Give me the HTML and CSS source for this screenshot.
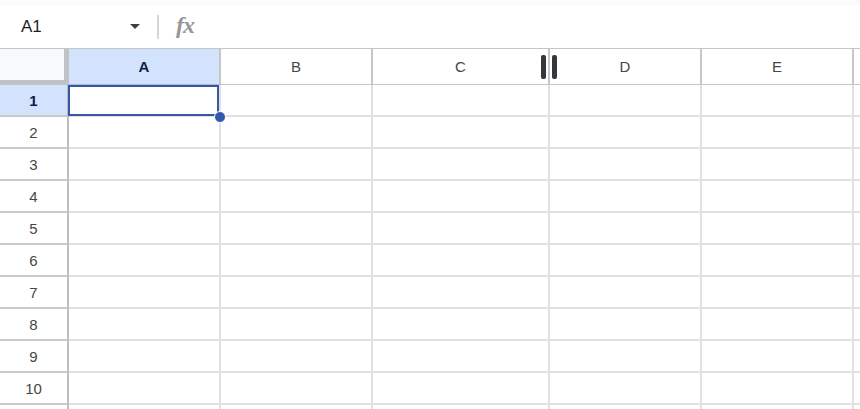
FILE: index.html
```html
<!DOCTYPE html>
<html>
<head>
<meta charset="utf-8">
<link rel="stylesheet" href="styles.css">
</head>
<body>
<div class="topstrip"></div>
<div class="fbar">
  <div class="namebox">
    <span class="ref">A1</span>
    <span class="caret"></span>
  </div>
  <div class="sep"></div>
  <span class="fx">fx</span>
</div>
<div class="sheet">
  <div class="hrow">
    <div class="corner"></div>
    <div class="ch sel">A</div>
    <div class="ch">B</div>
    <div class="ch wide">C</div>
    <div class="ch">D</div>
    <div class="ch">E</div>
    <div class="ch rest"></div>
    <div class="resize"><span></span><span></span></div>
  </div>
  <div class="row">
    <div class="rh sel">1</div>
    <div class="c active"><div class="selbox"></div><div class="dot"></div></div>
    <div class="c"></div><div class="c wide"></div><div class="c"></div><div class="c"></div><div class="c rest"></div>
  </div>
  <div class="row"><div class="rh">2</div><div class="c"></div><div class="c"></div><div class="c wide"></div><div class="c"></div><div class="c"></div><div class="c rest"></div></div>
  <div class="row"><div class="rh">3</div><div class="c"></div><div class="c"></div><div class="c wide"></div><div class="c"></div><div class="c"></div><div class="c rest"></div></div>
  <div class="row"><div class="rh">4</div><div class="c"></div><div class="c"></div><div class="c wide"></div><div class="c"></div><div class="c"></div><div class="c rest"></div></div>
  <div class="row"><div class="rh">5</div><div class="c"></div><div class="c"></div><div class="c wide"></div><div class="c"></div><div class="c"></div><div class="c rest"></div></div>
  <div class="row"><div class="rh">6</div><div class="c"></div><div class="c"></div><div class="c wide"></div><div class="c"></div><div class="c"></div><div class="c rest"></div></div>
  <div class="row"><div class="rh">7</div><div class="c"></div><div class="c"></div><div class="c wide"></div><div class="c"></div><div class="c"></div><div class="c rest"></div></div>
  <div class="row"><div class="rh">8</div><div class="c"></div><div class="c"></div><div class="c wide"></div><div class="c"></div><div class="c"></div><div class="c rest"></div></div>
  <div class="row"><div class="rh">9</div><div class="c"></div><div class="c"></div><div class="c wide"></div><div class="c"></div><div class="c"></div><div class="c rest"></div></div>
  <div class="row"><div class="rh">10</div><div class="c"></div><div class="c"></div><div class="c wide"></div><div class="c"></div><div class="c"></div><div class="c rest"></div></div>
  <div class="row"><div class="rh"></div><div class="c"></div><div class="c"></div><div class="c wide"></div><div class="c"></div><div class="c"></div><div class="c rest"></div></div>
</div>
</body>
</html>
```

FILE: styles.css
```css
* { box-sizing: border-box; }
html, body {
  margin: 0;
  padding: 0;
  background: #ffffff;
  overflow: hidden;
  height: 409px;
  font-family: "Liberation Sans", Arial, sans-serif;
}
.topstrip {
  height: 5px;
  background: #f9fbfd;
}
.fbar {
  height: 44px;
  display: flex;
  align-items: center;
  border-bottom: 1px solid #c4c7c5;
}
.namebox {
  width: 157px;
  display: flex;
  align-items: center;
  justify-content: space-between;
  padding-left: 21px;
  padding-right: 17px;
}
.ref {
  font-size: 17px;
  color: #1f1f1f;
}
.caret {
  width: 0;
  height: 0;
  border-left: 5px solid transparent;
  border-right: 5px solid transparent;
  border-top: 5px solid #3c4043;
}
.sep {
  width: 2px;
  height: 24px;
  background: #d6d6d6;
}
.fx {
  margin-left: 17px;
  margin-top: -2px;
  font-family: "Liberation Serif", "Times New Roman", serif;
  font-style: italic;
  font-weight: bold;
  font-size: 24px;
  color: #979797;
  letter-spacing: -1px;
}
.sheet {
  display: flex;
  flex-direction: column;
}
.hrow, .row {
  display: flex;
  position: relative;
  flex: none;
}
.hrow { height: 36px; }
.row { height: 32px; }
.corner {
  width: 69px;
  flex: none;
  background: #f8f9fa;
  border-right: 5px solid #c0c2c4;
  border-bottom: 5px solid #c0c2c4;
}
.ch {
  width: 152px;
  flex: none;
  border-right: 2px solid #c4c7c5;
  border-bottom: 1px solid #c4c7c5;
  display: flex;
  align-items: center;
  justify-content: center;
  font-size: 15px;
  color: #444746;
  background: #ffffff;
}
.ch.wide, .c.wide { width: 177px; }
.ch.rest, .c.rest { flex: 1; border-right: none; }
.ch.sel {
  background: #d3e3fd;
  color: #0b1e49;
  font-weight: bold;
  border-bottom-color: #a8b8d8;
}
.rh {
  width: 69px;
  flex: none;
  border-right: 2px solid #bdbdbd;
  border-bottom: 2px solid #c9c9c9;
  display: flex;
  align-items: center;
  justify-content: center;
  font-size: 15px;
  color: #444746;
}
.rh.sel {
  background: #d3e3fd;
  color: #0b1e49;
  font-weight: bold;
}
.c {
  width: 152px;
  flex: none;
  border-right: 2px solid #e1e1e1;
  border-bottom: 2px solid #e1e1e1;
}
.active { position: relative; }
.selbox {
  position: absolute;
  left: -1px;
  top: 0px;
  right: 0px;
  bottom: -1px;
  border: 2px solid #3358a8;
}
.dot {
  position: absolute;
  right: -7px;
  bottom: -8px;
  width: 12px;
  height: 12px;
  border-radius: 50%;
  background: #3358a8;
  border: 1px solid #ffffff;
  z-index: 2;
}
.resize {
  position: absolute;
  left: 541px;
  top: 6px;
  display: flex;
  gap: 6px;
}
.resize span {
  width: 5px;
  height: 24px;
  border-radius: 2px;
  background: #34383c;
}
```
